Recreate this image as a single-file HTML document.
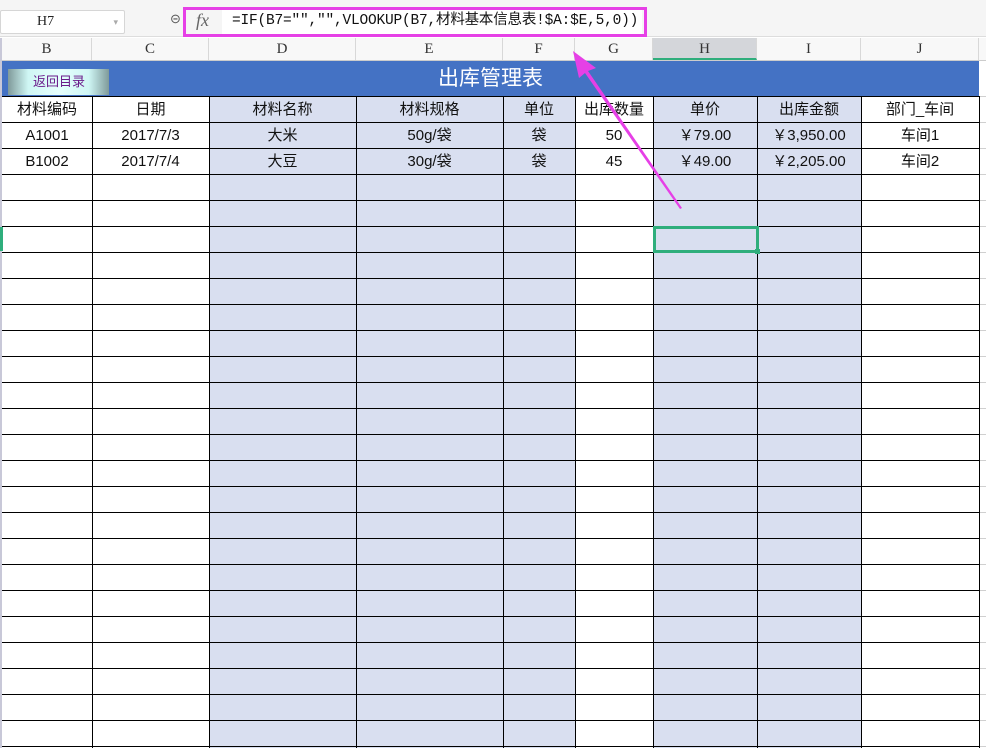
<!DOCTYPE html>
<html><head><meta charset="utf-8">
<style>
*{margin:0;padding:0;box-sizing:border-box}
body{width:986px;height:748px;overflow:hidden;background:#fff;position:relative;font-family:"Liberation Sans","Noto Sans CJK SC",sans-serif;font-size:15px;color:#111}
.a{position:absolute}
.t{position:absolute;height:26px;line-height:26px;text-align:center;white-space:nowrap}
.ch{position:absolute;top:38px;height:22px;line-height:22px;text-align:center;font-family:"Liberation Serif","Noto Serif CJK SC",serif;font-size:15px;color:#333;border-right:1px solid #d8d8d8}
.v{position:absolute;top:96px;bottom:0;width:1px;background:#000}
</style></head><body>
<div class="a" style="left:0;top:0;width:986px;height:37px;background:#f5f5f5;border-bottom:1px solid #ddd"></div>
<div class="a" style="left:0;top:10px;width:125px;height:24px;background:#fff;border:1px solid #d6d6d6;border-radius:2px;font-family:'Liberation Serif',serif;font-size:14px;line-height:22px;padding-left:36px;color:#222">H7<span style="position:absolute;right:6px;top:0;color:#aaa;font-size:9px">▾</span></div>
<div class="a" style="left:170px;top:11px;font-size:13px;color:#555">⊝</div>
<div class="a" style="left:222px;top:10px;width:420px;height:24px;background:#fff"></div>
<div class="a" style="left:196px;top:10px;font-family:'Liberation Serif',serif;font-style:italic;font-size:18px;color:#666">fx</div>
<div class="a" style="left:232px;top:11px;font-family:'Liberation Mono','Noto Sans CJK SC',monospace;font-size:14.5px;line-height:20px;color:#111;letter-spacing:-0.2px;white-space:nowrap">=IF(B7="","",VLOOKUP(B7,材料基本信息表!$A:$E,5,0))</div>
<div class="a" style="left:183px;top:7px;width:464px;height:30px;border:3px solid #e640e6"></div>
<div class="a" style="left:0;top:38px;width:986px;height:23px;background:#f8f8f8;border-bottom:1px solid #ccc"></div>
<div class="ch" style="left:2px;width:90px">B</div>
<div class="ch" style="left:92px;width:117px">C</div>
<div class="ch" style="left:209px;width:147px">D</div>
<div class="ch" style="left:356px;width:147px">E</div>
<div class="ch" style="left:503px;width:72px">F</div>
<div class="ch" style="left:575px;width:78px">G</div>
<div class="ch" style="left:653px;width:104px;background:#d4d6da;border-bottom:2px solid #2fae7c">H</div>
<div class="ch" style="left:757px;width:104px">I</div>
<div class="ch" style="left:861px;width:118px">J</div>
<div class="a" style="left:2px;top:61px;width:977px;height:35px;background:#4472c4"></div>
<div class="a" style="left:8px;top:69px;width:101px;height:26px;background:linear-gradient(90deg,#7f9a9a 0%,#cff6f4 20%,#e6fffd 50%,#cff6f4 80%,#7f9a9a 100%);color:#6a1a8a;font-size:13px;line-height:26px;text-align:left;padding-left:25px">返回目录</div>
<div class="a" style="left:438px;top:64px;color:#fff;font-size:21px;line-height:30px">出库管理表</div>
<div class="a" style="left:209px;top:96px;width:294px;height:652px;background:#d9dff0"></div>
<div class="a" style="left:503px;top:96px;width:72px;height:652px;background:#d9dff0"></div>
<div class="a" style="left:653px;top:96px;width:208px;height:652px;background:#d9dff0"></div>
<div class="a" style="left:979px;top:96px;width:7px;height:652px;background:repeating-linear-gradient(180deg,#d0d0d0 0 1px,transparent 1px 26px)"></div>
<div class="a" style="left:0;top:96px;width:979px;height:652px;background:repeating-linear-gradient(180deg,#000 0 1px,transparent 1px 26px)"></div>
<div class="a" style="left:0;top:38px;width:2px;height:710px;background:#c8c8d8"></div>
<div class="v" style="left:92px"></div>
<div class="v" style="left:209px"></div>
<div class="v" style="left:356px"></div>
<div class="v" style="left:503px"></div>
<div class="v" style="left:575px"></div>
<div class="v" style="left:653px"></div>
<div class="v" style="left:757px"></div>
<div class="v" style="left:861px"></div>
<div class="v" style="left:979px"></div>
<div class="t" style="top:97px;left:2px;width:90px">材料编码</div>
<div class="t" style="top:97px;left:92px;width:117px">日期</div>
<div class="t" style="top:97px;left:209px;width:147px">材料名称</div>
<div class="t" style="top:97px;left:356px;width:147px">材料规格</div>
<div class="t" style="top:97px;left:503px;width:72px">单位</div>
<div class="t" style="top:97px;left:575px;width:78px">出库数量</div>
<div class="t" style="top:97px;left:653px;width:104px">单价</div>
<div class="t" style="top:97px;left:757px;width:104px">出库金额</div>
<div class="t" style="top:97px;left:861px;width:118px">部门_车间</div>
<div class="t" style="top:123px;left:2px;width:90px">A1001</div>
<div class="t" style="top:123px;left:92px;width:117px">2017/7/3</div>
<div class="t" style="top:123px;left:209px;width:147px">大米</div>
<div class="t" style="top:123px;left:356px;width:147px">50g/袋</div>
<div class="t" style="top:123px;left:503px;width:72px">袋</div>
<div class="t" style="top:123px;left:575px;width:78px">50</div>
<div class="t" style="top:123px;left:653px;width:104px">￥79.00</div>
<div class="t" style="top:123px;left:757px;width:104px">￥3,950.00</div>
<div class="t" style="top:123px;left:861px;width:118px">车间1</div>
<div class="t" style="top:149px;left:2px;width:90px">B1002</div>
<div class="t" style="top:149px;left:92px;width:117px">2017/7/4</div>
<div class="t" style="top:149px;left:209px;width:147px">大豆</div>
<div class="t" style="top:149px;left:356px;width:147px">30g/袋</div>
<div class="t" style="top:149px;left:503px;width:72px">袋</div>
<div class="t" style="top:149px;left:575px;width:78px">45</div>
<div class="t" style="top:149px;left:653px;width:104px">￥49.00</div>
<div class="t" style="top:149px;left:757px;width:104px">￥2,205.00</div>
<div class="t" style="top:149px;left:861px;width:118px">车间2</div>
<div class="a" style="left:653px;top:226px;width:106px;height:27px;border:3px solid #2fae7c"></div>
<div class="a" style="left:755px;top:249px;width:5px;height:5px;background:#2fae7c"></div>
<div class="a" style="left:0;top:227px;width:3px;height:24px;background:#2fae7c"></div>
<svg class="a" style="left:0;top:0" width="986" height="748">
<polygon points="573,51 596,68 588,71 682,208 680,209 585,73 579,78" fill="#e640e6"/>
</svg>
</body></html>
